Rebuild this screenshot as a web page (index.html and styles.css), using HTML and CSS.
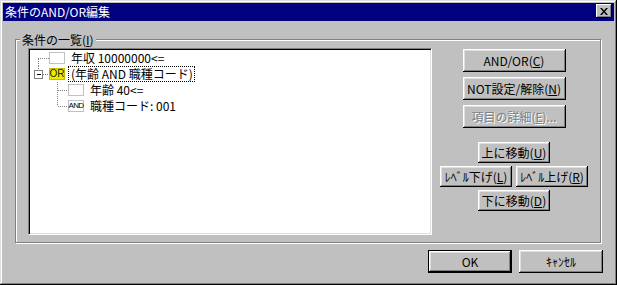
FILE: index.html
```html
<!DOCTYPE html>
<html>
<head>
    <link rel="stylesheet" href="styles.css">
</head>
<body>
    <div class="window">
        <div class="titlebar">
            <span class="title">条件のAND/OR編集</span>
            <button class="close">
                <svg width="8" height="7" viewBox="0 0 8 7"><path d="M0 0h2l2 2.5L6 0h2L5 3.5 8 7H6L4 4.5 2 7H0l3-3.5z" fill="#000"/></svg>
            </button>
        </div>

        <div class="group">
            <div class="group-label">条件の一覧(<u>I</u>)</div>
            <div class="group-body">
                <div class="tree">
                    <div class="row">
                        <svg class="lines" width="19" height="16">
                            <line x1="8" y1="8.5" x2="19" y2="8.5"/>
                            <line x1="8.5" y1="9" x2="8.5" y2="16"/>
                        </svg>
                        <span class="icon"></span>
                        <span class="label">年収 10000000&lt;=</span>
                    </div>
                    <div class="row">
                        <svg class="lines" width="19" height="16">
                            <line x1="8.5" y1="0" x2="8.5" y2="4"/>
                            <rect x="4.5" y="4.5" width="8" height="8" fill="#fff" stroke="#808080"/>
                            <line class="minus" x1="6.5" y1="8.5" x2="10.5" y2="8.5"/>
                            <line x1="13" y1="8.5" x2="19" y2="8.5"/>
                        </svg>
                        <span class="icon icon-or">OR</span>
                        <span class="label focused">(年齢 AND 職種コード)</span>
                    </div>
                    <div class="row">
                        <svg class="lines" width="38" height="16">
                            <line x1="27.5" y1="0" x2="27.5" y2="16"/>
                            <line x1="28" y1="8.5" x2="38" y2="8.5"/>
                        </svg>
                        <span class="icon"></span>
                        <span class="label">年齢 40&lt;=</span>
                    </div>
                    <div class="row">
                        <svg class="lines" width="38" height="16">
                            <line x1="27.5" y1="0" x2="27.5" y2="8"/>
                            <line x1="28" y1="8.5" x2="38" y2="8.5"/>
                        </svg>
                        <span class="icon icon-and">AND</span>
                        <span class="label">職種コード: 001</span>
                    </div>
                </div>

                <div class="side">
                    <div class="btn-stack">
                        <button class="btn wide">AND/OR(<u>C</u>)</button>
                        <button class="btn wide">NOT設定/解除(<u>N</u>)</button>
                        <button class="btn wide" disabled>項目の詳細(<u>E</u>)...</button>
                    </div>
                    <div class="move-pad">
                        <button class="btn small">上に移動(<u>U</u>)</button>
                        <div class="pair">
                            <button class="btn small">ﾚﾍﾞﾙ下げ(<u>L</u>)</button>
                            <button class="btn small">ﾚﾍﾞﾙ上げ(<u>R</u>)</button>
                        </div>
                        <button class="btn small">下に移動(<u>D</u>)</button>
                    </div>
                </div>
            </div>
        </div>

        <div class="footer">
            <button class="btn dialog default">OK</button>
            <button class="btn dialog">ｷｬﾝｾﾙ</button>
        </div>
    </div>
</body>
</html>
```

FILE: styles.css
```css
body {
    margin: 0;
    background: #c0c0c0;
    font-family: "Noto Sans CJK JP", "Liberation Sans", sans-serif;
    font-size: 12px;
}

.window {
    width: 617px;
    height: 285px;
    box-sizing: border-box;
    padding: 3px;
    background: #c0c0c0;
    box-shadow: inset -1px -1px #000, inset 1px 1px #dfdfdf, inset -2px -2px #808080, inset 2px 2px #fff;
}

.titlebar {
    display: flex;
    align-items: flex-start;
    height: 18px;
    background: #000080;
    color: #fff;
}

.title {
    padding-left: 2px;
    line-height: 18px;
    flex: 1;
}

.close {
    width: 16px;
    height: 14px;
    margin: 1px 2px 0 0;
    padding: 0;
    border: none;
    background: #c0c0c0;
    display: flex;
    align-items: center;
    justify-content: center;
    box-shadow: inset -1px -1px #000, inset 1px 1px #fff, inset -2px -2px #808080;
}

.group {
    margin: 18px 0 0 12px;
    width: 586px;
    height: 204px;
    box-sizing: border-box;
    border: 1px solid #808080;
    box-shadow: inset 1px 1px #fff, 1px 1px #fff;
}

.group-label {
    width: max-content;
    margin: -7px 0 0 4px;
    padding: 0 2px;
    height: 13px;
    line-height: 13px;
    background: #c0c0c0;
}

.group-body {
    display: flex;
    padding: 2px 0 0 12px;
}

.tree {
    width: 404px;
    height: 187px;
    box-sizing: border-box;
    background: #fff;
    border: 1px solid;
    border-color: #808080 #fff #fff #808080;
    box-shadow: inset 1px 1px #000, inset -1px -1px #dfdfdf;
    padding: 1px;
}

.row {
    display: flex;
    align-items: center;
    height: 16px;
}

.lines {
    flex: none;
    shape-rendering: crispEdges;
}

.lines line {
    stroke: #808080;
    stroke-width: 1;
    stroke-dasharray: 1 1;
}

.lines .minus {
    stroke: #000;
    stroke-dasharray: none;
}

.icon {
    flex: none;
    width: 16px;
    height: 12px;
    box-sizing: border-box;
    border: 1px solid #c0c0c0;
    background: #fff;
    font-family: "Liberation Sans Narrow", "Liberation Sans", sans-serif;
    font-size: 9px;
    line-height: 10px;
    display: flex;
    justify-content: center;
}

.icon-or {
    border-color: #c0c000;
    background: repeating-conic-gradient(#ffff00 0 25%, #d8d800 0 50%) 0 0 / 2px 2px;
    color: #202020;
    font-size: 10px;
}

.icon-and {
    color: #000;
    font-size: 8px;
    letter-spacing: -0.6px;
}

.label {
    margin-left: 3px;
    padding: 0 2px 0 3px;
    height: 16px;
    line-height: 15px;
    box-sizing: border-box;
    white-space: nowrap;
}

.focused {
    outline: 1px dotted #000;
    outline-offset: -1px;
}

.side {
    flex: 1;
    display: flex;
    flex-direction: column;
    align-items: center;
    padding-right: 4px;
}

.btn-stack {
    display: flex;
    flex-direction: column;
    gap: 5px;
    margin-top: 1px;
}

.move-pad {
    display: flex;
    flex-direction: column;
    align-items: center;
    gap: 3px;
    margin-top: 14px;
}

.pair {
    display: flex;
    gap: 4px;
}

.btn {
    padding: 0;
    border: none;
    background: #c0c0c0;
    font-family: inherit;
    font-size: 12px;
    color: #000;
    white-space: nowrap;
    box-shadow: inset -1px -1px #000, inset 1px 1px #fff, inset -2px -2px #808080, inset 2px 2px #dfdfdf;
}

.btn u {
    text-decoration-thickness: 1px;
}

.btn:disabled {
    color: #808080;
    text-shadow: 1px 1px #fff;
}

.wide {
    width: 103px;
    height: 23px;
}

.small {
    width: 72px;
    height: 21px;
}

.footer {
    display: flex;
    justify-content: flex-end;
    gap: 7px;
    margin-top: 7px;
    padding-right: 11px;
}

.dialog {
    width: 84px;
    height: 23px;
}

.default {
    border: 1px solid #000;
}
```
